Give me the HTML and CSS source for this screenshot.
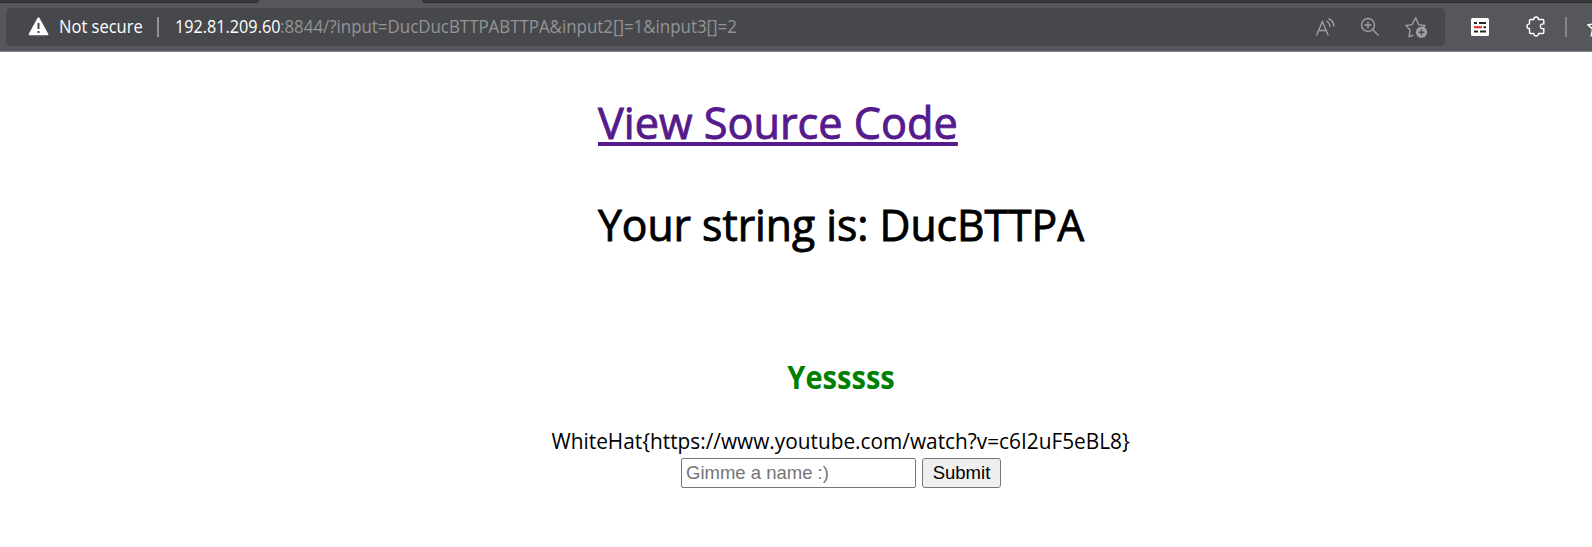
FILE: index.html
```html
<!DOCTYPE html>
<html lang="en">
<head>
<meta charset="utf-8">
<title>View Source Code</title>
<link rel="stylesheet" href="styles.css">
</head>
<body>
<header class="browser">
  <div class="tabstrip"><span class="tabs-left"></span><span class="tabs-right"></span></div>
  <div class="toolbar">
    <div class="address">
      <svg class="warning" width="21" height="19" viewBox="0 0 21 19"><path d="M10.5 1.3 19.3 17.3H1.7Z" fill="#fff" stroke="#fff" stroke-width="2" stroke-linejoin="round"/><path d="M10.5 6v6M10.5 14v2" stroke="#47484c" stroke-width="2"/></svg>
      <span class="security">Not secure</span>
      <span class="divider"></span>
      <span class="host">192.81.209.60</span><span class="path">:8844/?input=DucDucBTTPABTTPA&amp;input2[]=1&amp;input3[]=2</span>
      <span class="actions">
        <svg width="20" height="20" viewBox="0 0 20 20"><path d="M1.500 18.500 7.400 4.500 13.300 18.500M3.500 13.500h7.800M11.500 4q3.200 1.700 3.500 6M13.500 1.500q5 2.200 5.500 8"/></svg>
        <svg width="20" height="20" viewBox="0 0 20 20"><circle cx="8" cy="8" r="6.500"/><path d="M4.500 8h7M8 4.500v7M12.800 12.800l5.700 5.700"/></svg>
        <svg width="23" height="21" viewBox="0 0 23 21"><path d="m8.500 18.300-4.400 1.200.9-6.600L1 8.500l6-.9L10.700 1l3 6.600 6.200.9-1.500 2"/><circle cx="16.500" cy="15.200" r="5.600" fill="#a0a0a2" stroke="none"/><path d="M13.500 15.200h6M16.500 12.200v6" stroke="#47484c"/></svg>
      </span>
    </div>
    <div class="extensions">
      <svg class="reader" width="18" height="18" viewBox="0 0 18 18"><rect width="18" height="18" rx="1.500" fill="#fff"/><path d="M3 5h3M8 5h7M12.500 9.200H15M3 13.500h4M9 13.500h6" stroke="#26272a" stroke-width="2"/><path d="M3 9.200h8" stroke="#e8342e" stroke-width="2.200"/></svg>
      <svg class="puzzle" width="20" height="21" viewBox="0 0 20 21"><path d="M4.500 3.500h3.200c.3-3.300 4.600-3.300 4.900 0h4.200q1 0 1 1v3.400c-4.600-.8-4.600 5.600 0 4.800v3.800q0 1-1 1h-4.200c-.3 3.300-4.600 3.300-4.900 0H4.500q-1 0-1-1v-3.800c-3.400-.3-3.400-4.500 0-4.800V4.500q0-1 1-1Z"/></svg>
      <span class="separator"></span>
      <svg class="favorites" width="20" height="20" viewBox="0 0 20 20"><path d="m10 1 2.700 6 6.300.8-4.600 4.300 1.200 6.400-5.600-3.200-5.600 3.200 1.200-6.400L1 7.800l6.300-.8Z"/></svg>
    </div>
  </div>
</header>
<main class="page">
  <div class="headings">
    <h1 class="title"><a class="source" href="#">View Source Code</a></h1>
    <h1 class="title"><span class="result">Your string is: DucBTTPA</span></h1>
  </div>
  <div class="answer">
    <h2 class="verdict"><span class="yes">Yesssss</span></h2>
    <div class="flag"><span class="flagtext">WhiteHat{https://www.youtube.com/watch?v=c6I2uF5eBL8}</span></div>
    <form class="form"><input class="name" type="text" placeholder="Gimme a name :)"><button class="submit" type="button">Submit</button></form>
  </div>
</main>
</body>
</html>
```
FILE: styles.css
```css
* { box-sizing: border-box; }
body { margin: 0; height: 547px; overflow: hidden; background: #fff; color: #000; font-family: "Open Sans", "Noto Sans", sans-serif; }
.browser { height: 52px; background: #56575c; border-bottom: 1px solid #858589; overflow: hidden; }
.tabstrip { display: flex; justify-content: space-between; height: 3px; }
.tabs-left, .tabs-right { height: 3px; background: #35363a; border-bottom: 1px solid #2c2d30; }
.tabs-left { width: 259px; border-bottom-right-radius: 4px; }
.tabs-right { width: 1170px; border-bottom-left-radius: 4px; }
.toolbar { display: flex; padding-top: 5px; }
.address { display: flex; align-items: center; flex: none; width: 1439px; height: 38px; margin-left: 6px; padding-left: 22px; border-radius: 5px; background: #47484c; font-size: 17.5px; line-height: 24px; white-space: nowrap; }
.warning { margin-bottom: 1px; }
.security, .host, .path { padding-bottom: 2px; transform-origin: left; }
.security { margin: 0 -5px 0 10px; color: #fff; transform: scaleX(.944); }
.divider { width: 2px; height: 20px; margin: 0 16px 0 14px; background: #929295; }
.host { margin-right: -8.5px; color: #fff; transform: scaleX(.926); }
.path { color: #949497; transform: scaleX(.965); }
.actions { display: flex; gap: 25px; margin-left: auto; padding: 0 17px 0 0; }
.actions svg { fill: none; stroke: #a0a0a2; stroke-width: 1.4; }
.extensions { display: flex; align-items: center; flex: none; height: 38px; }
.reader { margin-left: 26px; }
.puzzle { margin: 0 0 1px 37px; fill: none; stroke: #fff; stroke-width: 1.4; }
.separator { width: 2px; height: 20px; margin: 0 20px 0 19px; background: #858589; }
.favorites { fill: none; stroke: #fff; stroke-width: 1.5; }
.headings { padding: 41px 0 0 598px; }
.title { margin: 0 0 42px; font-size: 43.5px; line-height: 60px; font-weight: 500; white-space: nowrap; -webkit-text-stroke: .9px currentColor; }
.source, .result { display: inline-block; transform-origin: left; }
.source { color: #551a8b; text-decoration-thickness: 4px; text-underline-offset: 3px; transform: scaleX(.994); }
.result { transform: scaleX(.98); }
.answer { padding: 58px 0 0 90px; text-align: center; }
.verdict { margin: 0 0 26px; font-size: 33px; line-height: 44px; color: #008000; }
.yes { display: inline-block; transform: scaleX(.88); }
.flag { font-size: 22px; line-height: 30px; white-space: nowrap; }
.flagtext { display: inline-block; transform: scaleX(.946); }
.form { display: flex; justify-content: center; gap: 6px; margin-top: 3px; }
.name, .submit { height: 30px; border: 1px solid #767676; font: 18.5px "Liberation Sans", Arial, sans-serif; }
.name { width: 235px; padding: 1px 4px; border-radius: 2px; background: #fff; }
.name::placeholder { color: #757575; }
.submit { width: 79px; padding: 0; border-radius: 3px; background: #efefef; color: #000; }
```
